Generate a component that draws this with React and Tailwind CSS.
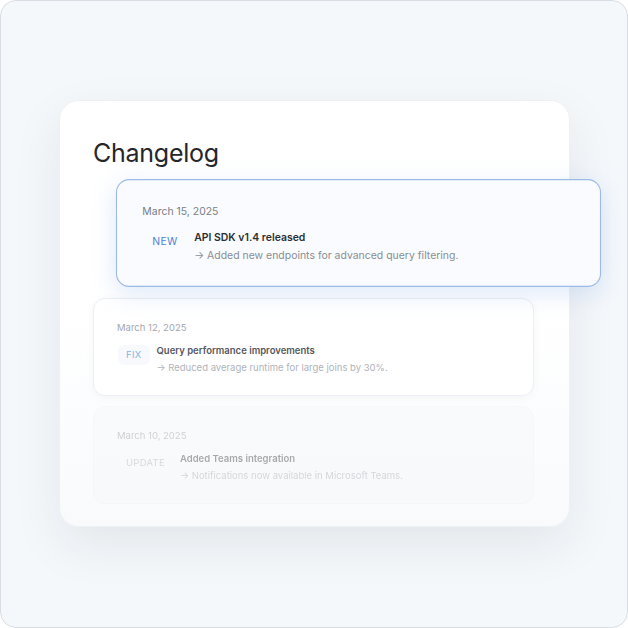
import React from "react";

const entries = [
  {
    date: "March 15, 2025",
    badge: "NEW",
    title: "API SDK v1.4 released",
    desc: "Added new endpoints for advanced query filtering.",
  },
  {
    date: "March 12, 2025",
    badge: "FIX",
    title: "Query performance improvements",
    desc: "Reduced average runtime for large joins by 30%.",
  },
  {
    date: "March 10, 2025",
    badge: "UPDATE",
    title: "Added Teams integration",
    desc: "Notifications now available in Microsoft Teams.",
  },
];

function Entry({ e, variant }) {
  const base =
    "h-[98px] w-[441px] rounded-xl px-[23px] pt-[22px] flex flex-col";
  let cls = "";
  if (variant === 0)
    cls =
      "bg-[#f9fbfe] border border-[#9dbbe6] shadow-[0_6px_22px_rgba(96,150,230,0.2)] translate-x-[45px] -translate-y-[6px] scale-110 relative z-10";
  else if (variant === 1)
    cls =
      "bg-white border border-[#eceff3] shadow-[0_2px_10px_rgba(15,23,42,0.04)]";
  else
    cls =
      "bg-[#f7f9fb] border border-[#f0f2f5] opacity-50 blur-[0.6px]";
  const dateC = variant === 0 ? "text-[#7a7f86]" : "text-[#a3a7ad]";
  const titleC = variant === 0 ? "text-[#2d2f33]" : "text-[#55585e]";
  const descC = variant === 0 ? "text-[#8a8e94]" : "text-[#b0b4ba]";
  const badgeC =
    variant === 0
      ? "text-[#4f82d6] bg-transparent"
      : variant === 1
      ? "text-[#86b4e2] bg-[#f7f9fc]"
      : "text-[#b4b8be] bg-transparent";
  return (
    <div className={`${base} ${cls}`}>
      <div className={`text-[9.5px] leading-[14px] ${dateC}`}>{e.date}</div>
      <div className="mt-[9px] flex items-start gap-[7px] pl-px">
        <div
          className={`mt-px rounded-md px-2 py-[3px] text-[9.5px] leading-[14px] tracking-[0.03em] ${badgeC}`}
        >
          {e.badge}
        </div>
        <div className="flex flex-col">
          <div
            className={`text-[9.5px] leading-[14px] font-semibold ${titleC}`}
          >
            {e.title}
          </div>
          <div className={`mt-[3px] text-[9.5px] leading-[14px] ${descC}`}>
            → {e.desc}
          </div>
        </div>
      </div>
    </div>
  );
}

export default function App() {
  return (
    <div
      className="w-[628px] h-[628px] overflow-hidden rounded-[16px] border border-[#d9dee5] bg-[#f5f8fb] pt-[99px] pl-[58px]"
      style={{ fontFamily: "Inter, 'Noto Sans', sans-serif" }}
    >
      <div className="w-[511px] h-[427px] rounded-[20px] bg-gradient-to-b from-white via-white to-[#f8fafc] border border-[#eef1f4] shadow-[0_18px_50px_rgba(15,23,42,0.08)] pl-[33px] pt-[36px]">
        <h1 className="text-[25px] leading-[32px] font-normal text-[#25272b] tracking-[-0.01em]">
          Changelog
        </h1>
        <div className="mt-[21px] flex flex-col gap-[10px]">
          {entries.map((e, i) => (
            <Entry key={i} e={e} variant={i} />
          ))}
        </div>
      </div>
    </div>
  );
}
